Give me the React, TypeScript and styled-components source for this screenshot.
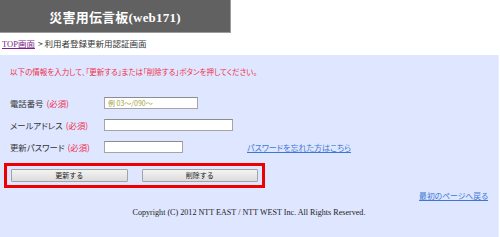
import * as React from "react"
import styled, { createGlobalStyle } from "styled-components"

const GlobalStyle = createGlobalStyle`
    html, body {
        margin: 0;
        padding: 0;
        background: #ffffff;
    }

    body {
        width: 500px;
        height: 237px;
        overflow: hidden;
        font-family: "Noto Sans CJK JP", "Noto Sans", sans-serif;
        font-feature-settings: "palt";
        color: #333333;
    }
`

const Header = styled.header`
    box-sizing: border-box;
    width: 231px;
    height: 33px;
    display: flex;
    align-items: center;
    justify-content: center;
    background: #616161;
    border-right: 1px solid #9c9c9c;
    border-bottom: 1px solid #9c9c9c;
`

const Title = styled.h1`
    margin: 0;
    color: #ffffff;
    font-family: "Liberation Serif", "Noto Sans CJK JP", serif;
    font-size: 13px;
    font-weight: bold;
    letter-spacing: 0.2px;
`

const Breadcrumb = styled.nav`
    display: flex;
    align-items: center;
    height: 18px;
    margin-top: 1px;
    padding-left: 2px;
    font-size: 8.5px;
    color: #333333;
`

const TopLink = styled.a`
    color: #7b1f8c;
    text-decoration: underline;
    margin-right: 3px;

    span {
        font-family: "Liberation Serif", serif;
    }
`

const Panel = styled.main`
    box-sizing: border-box;
    width: 499px;
    height: 182px;
    margin-top: 3px;
    padding-top: 11px;
    background: #dfe6ff;
    border-right: 1px solid #e9eeff;
`

const Message = styled.p`
    margin: 0;
    padding-left: 10px;
    height: 12px;
    line-height: 12px;
    font-size: 7.5px;
    color: #f0304a;
`

const Form = styled.div`
    margin-top: 14px;
    display: flex;
    flex-direction: column;
`

const Row = styled.div`
    display: flex;
    align-items: center;
    height: 22px;
    padding-left: 10px;
`

const Label = styled.span`
    width: 94px;
    font-size: 8.4px;
    color: #333333;
    white-space: nowrap;
`

const Required = styled.span`
    color: #f0304a;
    margin-left: 3px;
`

const Field = styled.input<{ $width: number }>`
    box-sizing: border-box;
    width: ${p => p.$width}px;
    height: 12px;
    margin: 0;
    padding: 0 3px;
    border: 1px solid #a5a5a5;
    border-top-color: #8c8c8c;
    background: #ffffff;
    font-family: "Noto Sans CJK JP", sans-serif;
    font-size: 7px;
    outline: none;

    &::placeholder {
        color: #a3a33a;
    }
`

const HelpLink = styled.a`
    margin-left: 64px;
    font-size: 8px;
    color: #3d78d6;
    text-decoration: underline;
`

const ActionBox = styled.div`
    box-sizing: border-box;
    width: 261px;
    height: 25px;
    margin: 5px 0 0 4px;
    padding: 0 4px;
    display: flex;
    align-items: center;
    gap: 14px;
    border: 3px solid #ee0000;
`

const Button = styled.button`
    box-sizing: border-box;
    width: 117px;
    height: 13px;
    margin: 0;
    padding: 0;
    border: 1px solid #a3a3a3;
    border-radius: 1px;
    background: linear-gradient(#f3f3f3, #dcdcdc);
    font-family: "Noto Sans CJK JP", sans-serif;
    font-size: 7px;
    line-height: 11px;
    color: #222222;
`

const BackRow = styled.div`
    display: flex;
    justify-content: flex-end;
    margin-top: 2px;
    padding-right: 10px;
    height: 12px;
    line-height: 12px;
`

const BackLink = styled.a`
    font-size: 7.8px;
    color: #3d78d6;
    text-decoration: underline;
`

const Copyright = styled.footer`
    margin-top: 5px;
    text-align: center;
    height: 12px;
    line-height: 12px;
    font-family: "Liberation Serif", serif;
    font-size: 8.1px;
    color: #222222;
`

export default function App() {
    return (
        <>
            <GlobalStyle />
            <Header>
                <Title>災害用伝言板(web171)</Title>
            </Header>
            <Breadcrumb>
                <TopLink href="#"><span>TOP</span>画面</TopLink>
                &gt; 利用者登録更新用認証画面
            </Breadcrumb>
            <Panel>
                <Message>以下の情報を入力して、「更新する」または「削除する」ボタンを押してください。</Message>
                <Form>
                    <Row>
                        <Label>電話番号<Required>(必須)</Required></Label>
                        <Field $width={94} placeholder="例 03～/090～" />
                    </Row>
                    <Row>
                        <Label>メールアドレス<Required>(必須)</Required></Label>
                        <Field $width={129} />
                    </Row>
                    <Row>
                        <Label>更新パスワード<Required>(必須)</Required></Label>
                        <Field $width={79} type="password" />
                        <HelpLink href="#">パスワードを忘れた方はこちら</HelpLink>
                    </Row>
                </Form>
                <ActionBox>
                    <Button>更新する</Button>
                    <Button>削除する</Button>
                </ActionBox>
                <BackRow>
                    <BackLink href="#">最初のページへ戻る</BackLink>
                </BackRow>
                <Copyright>Copyright (C) 2012 NTT EAST / NTT WEST Inc. All Rights Reserved.</Copyright>
            </Panel>
        </>
    )
}
